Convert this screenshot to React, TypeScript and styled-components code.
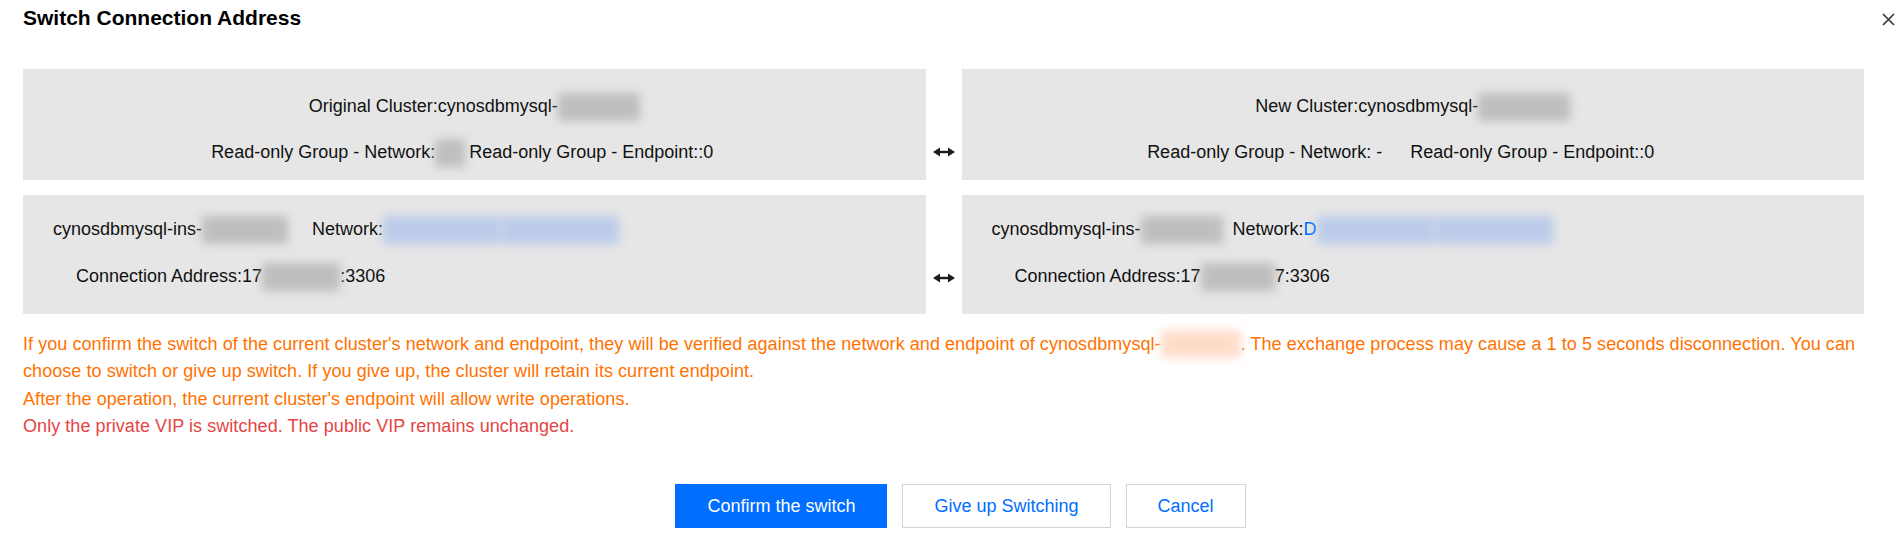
import React from 'react';
import styled, { createGlobalStyle } from 'styled-components';

const GlobalStyle = createGlobalStyle`
	html, body {
		margin: 0;
		padding: 0;
		background: #ffffff;
	}
	body {
		font-family: 'Liberation Sans', Arial, Helvetica, sans-serif;
		color: #000000;
	}
`;

type Tone = 'gray' | 'blue' | 'orange';

const toneColor: Record<Tone, string> = {
	gray: 'rgba(180, 180, 180, 0.8)',
	blue: 'rgba(170, 192, 235, 0.7)',
	orange: 'rgba(255, 208, 184, 0.75)',
};

const App = (): JSX.Element => {
	return (
		<>
			<GlobalStyle />
			<Dialog>
				<Title>Switch Connection Address</Title>
				<CloseButton aria-label='close'>
					<svg width='13' height='13' viewBox='0 0 13 13'>
						<path d='M1 1 L12 12 M12 1 L1 12' stroke='#3a3a3a' strokeWidth='1.7' fill='none' />
					</svg>
				</CloseButton>

				<PairGrid>
					<Panel $variant='summary'>
						<Line>
							Original Cluster:cynosdbmysql-
							<Blur $w={82} />
						</Line>
						<Line $trail>
							<Field>Read-only Group - Network:</Field>
							<Blur $w={30} $gap={4} />
							<Field>Read-only Group - Endpoint::0</Field>
						</Line>
					</Panel>
					<ArrowCell>
						<SwapArrow />
					</ArrowCell>
					<Panel $variant='summary'>
						<Line>
							New Cluster:cynosdbmysql-
							<Blur $w={92} />
						</Line>
						<Line $trail>
							<Field $gap={28}>Read-only Group - Network: -</Field>
							<Field>Read-only Group - Endpoint::0</Field>
						</Line>
					</Panel>

					<Panel $variant='detail'>
						<Line>
							cynosdbmysql-ins-
							<Blur $w={86} $gap={24} />
							Network:
							<Blur $w={118} $tone='blue' />
							<Blur $w={118} $tone='blue' />
						</Line>
						<Line $indent>
							Connection Address:17
							<Blur $w={78} />
							:3306
						</Line>
					</Panel>
					<ArrowCell>
						<SwapArrow />
					</ArrowCell>
					<Panel $variant='detail'>
						<Line>
							cynosdbmysql-ins-
							<Blur $w={82} $gap={10} />
							Network:<Link>D</Link>
							<Blur $w={118} $tone='blue' />
							<Blur $w={118} $tone='blue' />
						</Line>
						<Line $indent>
							Connection Address:17
							<Blur $w={74} />
							7:3306
						</Line>
					</Panel>
				</PairGrid>

				<Notice>
					<p>
						If you confirm the switch of the current cluster's network and endpoint, they will be verified against the
						network and endpoint of cynosdbmysql-
						<Blur $w={80} $tone='orange' $inline />. The exchange process may cause a 1 to 5 seconds disconnection. You can
						choose to switch or give up switch. If you give up, the cluster will retain its current endpoint.
					</p>
					<p>After the operation, the current cluster's endpoint will allow write operations.</p>
					<p className='danger'>Only the private VIP is switched. The public VIP remains unchanged.</p>
				</Notice>

				<Footer>
					<Button $primary>Confirm the switch</Button>
					<Button>Give up Switching</Button>
					<Button>Cancel</Button>
				</Footer>
			</Dialog>
		</>
	);
};

const SwapArrow = (): JSX.Element => (
	<svg width='22' height='10' viewBox='0 0 22 10'>
		<polygon points='0,5 7,0.5 7,9.5' fill='#1c1c1c' />
		<polygon points='22,5 15,0.5 15,9.5' fill='#1c1c1c' />
		<rect x='6' y='3.8' width='10' height='2.4' fill='#1c1c1c' />
	</svg>
);

const Dialog = styled.div`
	position: relative;
	box-sizing: border-box;
	width: 1898px;
	height: 538px;
	padding: 6px 34px 0 23px;
	overflow: hidden;
`;

const Title = styled.h2`
	margin: 0 0 39px;
	font-size: 21px;
	line-height: 24px;
	font-weight: 700;
	color: #000000;
`;

const CloseButton = styled.button`
	position: absolute;
	top: 13px;
	right: 3px;
	width: 13px;
	height: 13px;
	padding: 0;
	border: none;
	background: transparent;
	display: flex;

	svg {
		display: block;
	}
`;

const PairGrid = styled.div`
	display: grid;
	grid-template-columns: 1fr 36px 1fr;
	row-gap: 15px;
`;

const Panel = styled.div<{ $variant: 'summary' | 'detail' }>`
	display: flex;
	flex-direction: column;
	background: #e6e6e6;
	font-size: 18px;
	color: #111111;
	${(p) =>
		p.$variant === 'summary'
			? `
		align-items: center;
		gap: 19px;
		padding: 24px 0 14px;
	`
			: `
		align-items: flex-start;
		gap: 20px;
		padding: 21px 30px 24px;
	`}
`;

const Line = styled.div<{ $indent?: boolean; $trail?: boolean }>`
	display: flex;
	align-items: center;
	height: 27px;
	white-space: nowrap;
	margin-left: ${(p) => (p.$indent ? '23px' : '0')};
	padding-right: ${(p) => (p.$trail ? '24px' : '0')};
`;

const Field = styled.span<{ $gap?: number }>`
	margin-right: ${(p) => p.$gap ?? 0}px;
`;

const Link = styled.span`
	color: #006eff;
`;

const Blur = styled.span<{ $w: number; $tone?: Tone; $gap?: number; $inline?: boolean }>`
	display: inline-block;
	width: ${(p) => p.$w}px;
	height: 28px;
	margin-right: ${(p) => p.$gap ?? 0}px;
	vertical-align: ${(p) => (p.$inline ? '-8px' : 'middle')};
	background: ${(p) => toneColor[p.$tone ?? 'gray']};
	filter: blur(5px);
	flex-shrink: 0;
`;

const ArrowCell = styled.div`
	display: flex;
	justify-content: center;
	align-items: flex-start;
	padding-top: 70px;

	svg {
		margin-top: 8px;
	}
`;

const Notice = styled.div`
	margin-top: 16px;
	font-size: 18px;
	line-height: 27.3px;
	letter-spacing: 0.06px;
	color: #ff7200;

	p {
		margin: 0;
	}

	.danger {
		color: #e54545;
	}
`;

const Footer = styled.div`
	display: flex;
	justify-content: center;
	gap: 15px;
	margin-top: 44px;
	padding-left: 34px;
`;

const Button = styled.button<{ $primary?: boolean }>`
	height: 44px;
	padding: 0 31px;
	font-family: inherit;
	font-size: 18px;
	border: 1px solid ${(p) => (p.$primary ? '#006eff' : '#cfd5de')};
	background: ${(p) => (p.$primary ? '#006eff' : '#ffffff')};
	color: ${(p) => (p.$primary ? '#ffffff' : '#006eff')};
	cursor: pointer;
`;

export default App;
